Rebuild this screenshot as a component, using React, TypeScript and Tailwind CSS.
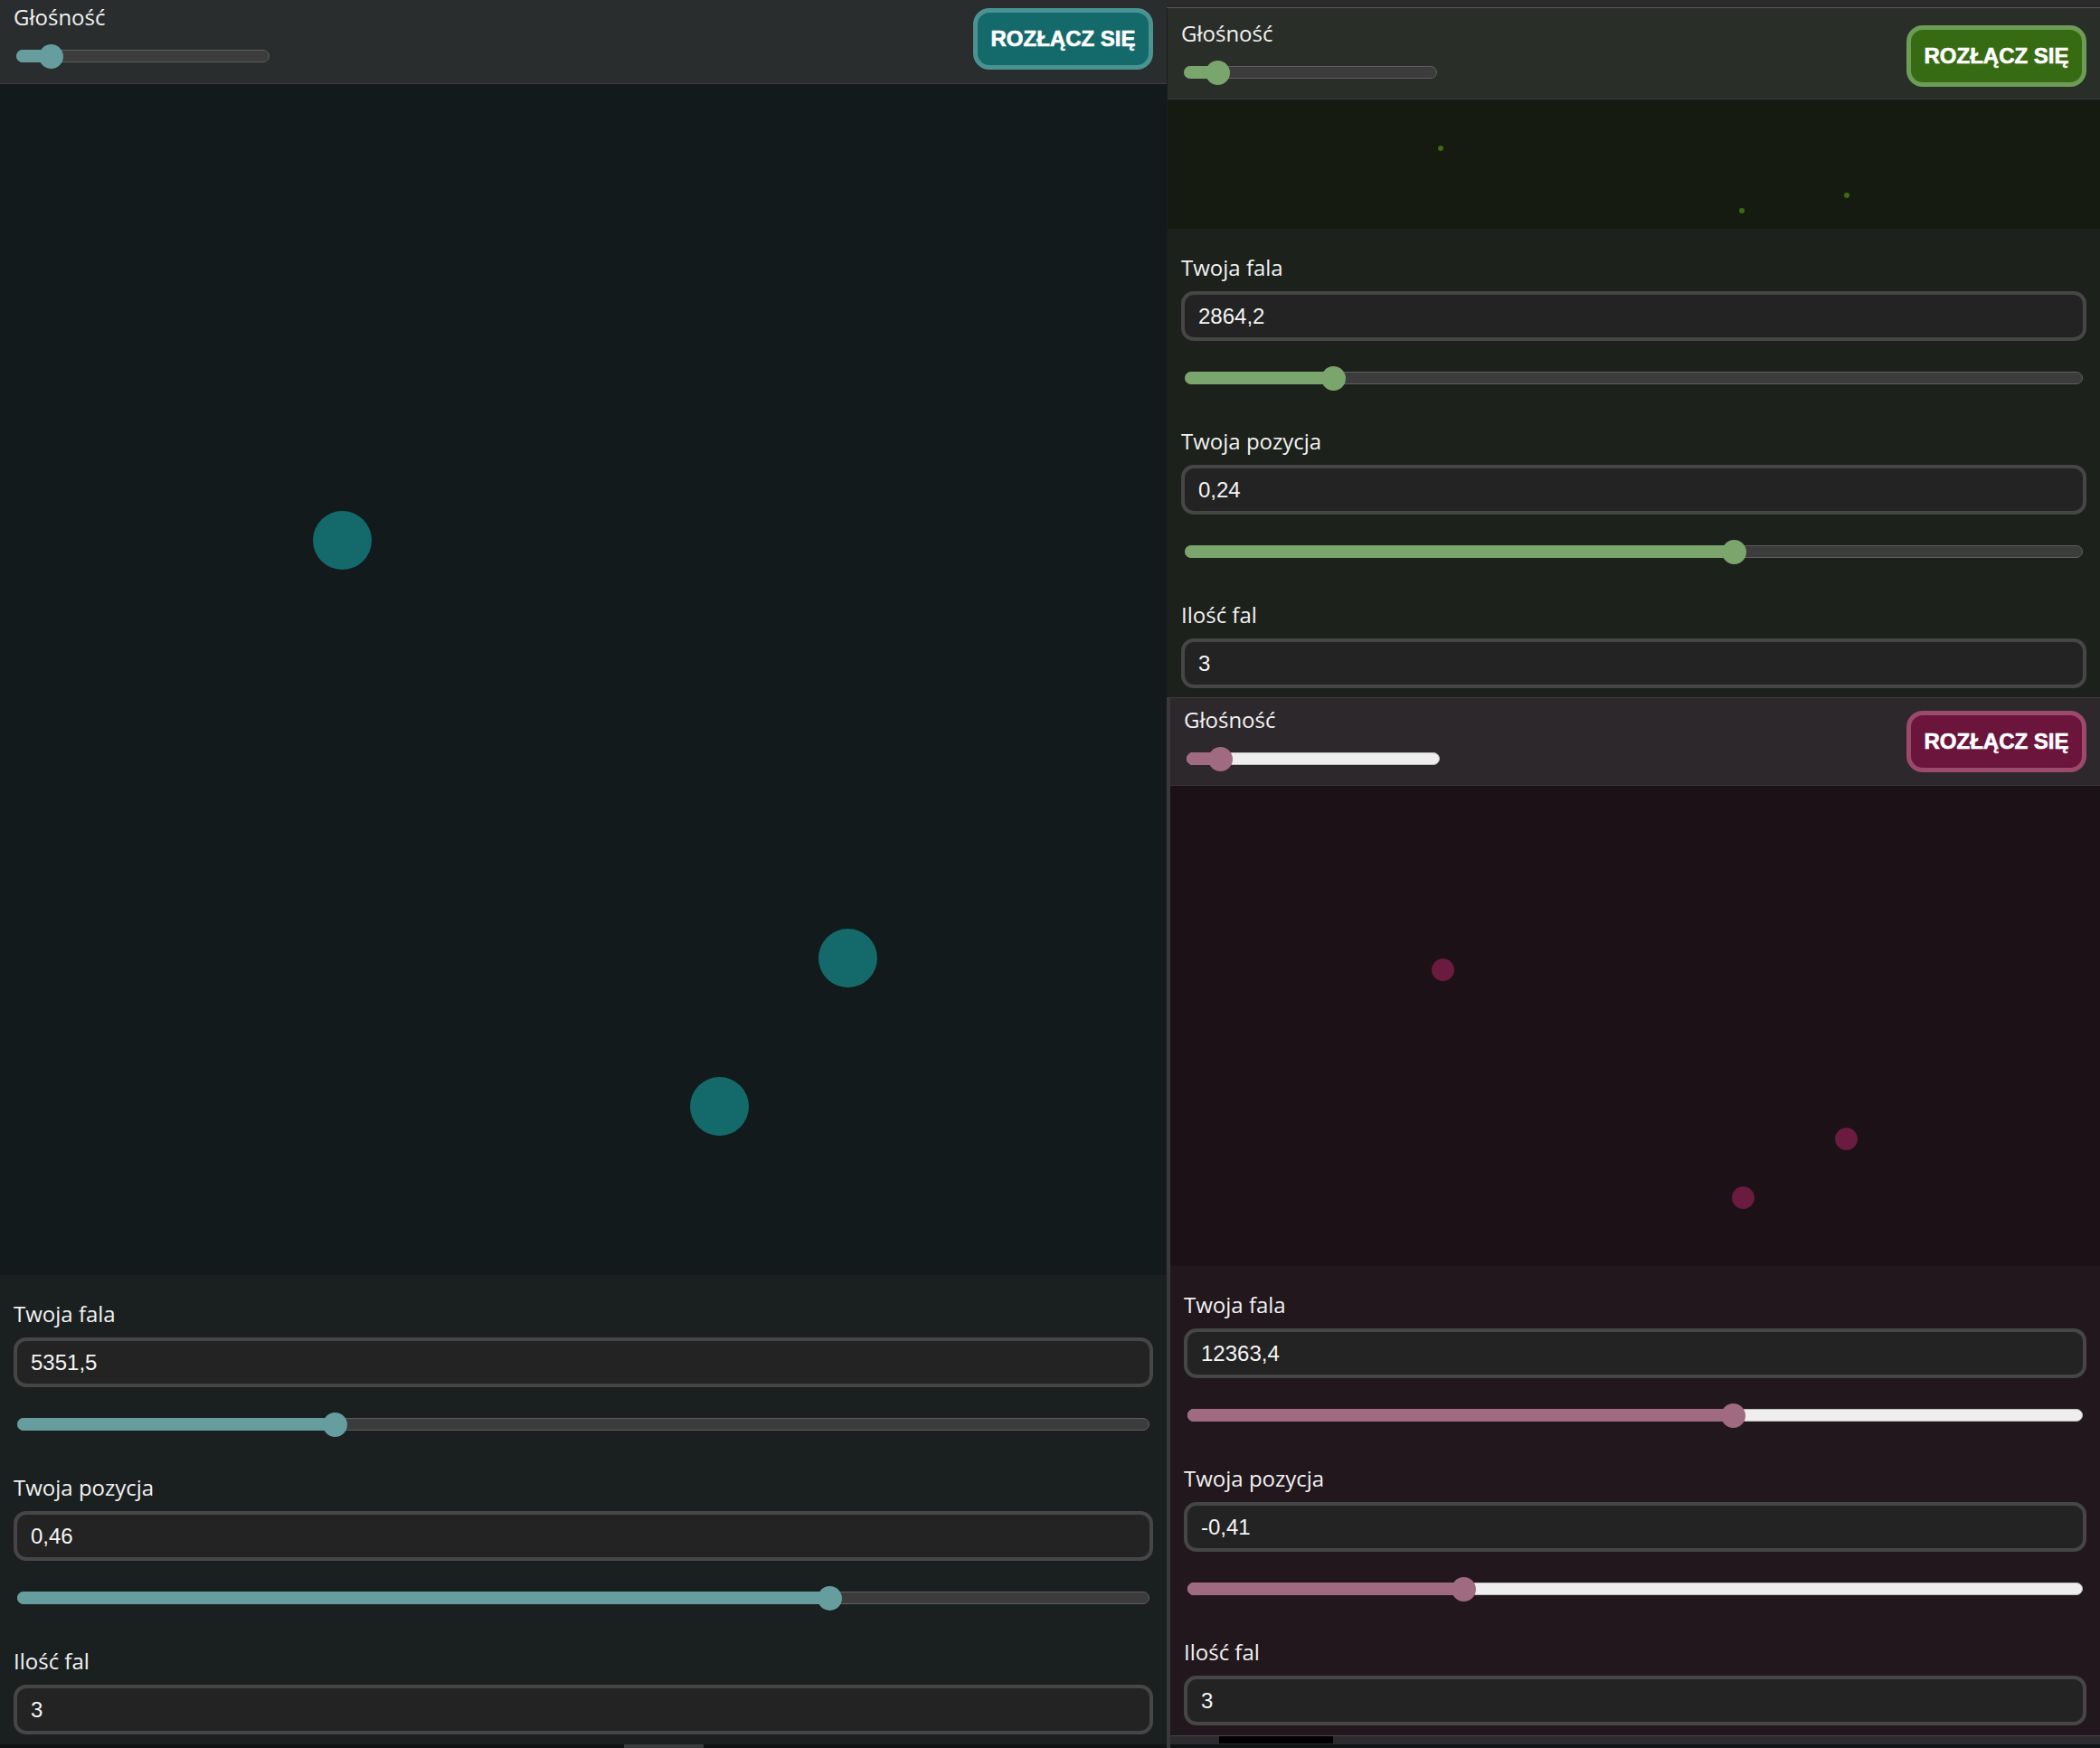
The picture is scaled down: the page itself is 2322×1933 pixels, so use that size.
import React from "react";

type Theme = {
  header: string;
  canvas: string;
  controls: string;
  fill: string;
  rest: string;
  btn: string;
  dot: string;
};

const teal: Theme = {
  header: "bg-[#292d2d] border-b border-[#373c3c]",
  canvas: "bg-[#121a1b]",
  controls: "bg-[#1a2020]",
  fill: "bg-[#669e9f]",
  rest: "bg-[#3c3c3c] border border-[#5e5e5e]",
  btn: "bg-[#146a6a] border-[#4b9393]",
  dot: "bg-[#146a6a]",
};

const green: Theme = {
  header: "bg-[#2a2e29] border-b border-[#383c37]",
  canvas: "bg-[#161b12]",
  controls: "bg-[#1c211b]",
  fill: "bg-[#7aa56c]",
  rest: "bg-[#3c3c3c] border border-[#5e5e5e]",
  btn: "bg-[#376b13] border-[#6d9d55]",
  dot: "bg-[#3a6b14]",
};

const pink: Theme = {
  header: "bg-[#2d282b] border-b border-[#3b3639]",
  canvas: "bg-[#1c1116]",
  controls: "bg-[#21171d]",
  fill: "bg-[#a06a80]",
  rest: "bg-[#eeeeee] border border-[#bdbdbd]",
  btn: "bg-[#6b143c] border-[#9b4a6c]",
  dot: "bg-[#6b1a40]",
};

const labelFont = { fontFamily: '"Open Sans", "Noto Sans", sans-serif' };
const valueFont = { fontFamily: '"Liberation Sans", Arial, sans-serif' };

function Slider({ pct, theme, className }: { pct: number; theme: Theme; className: string }) {
  return (
    <div className={`relative flex h-[28px] items-center ${className}`}>
      <div className={`h-[14px] w-full rounded-full ${theme.rest}`} />
      <div
        className={`absolute left-0 top-[7px] h-[14px] rounded-l-full ${theme.fill}`}
        style={{ width: `${pct}%` }}
      />
      <div
        className={`absolute top-[0.5px] h-[27px] w-[27px] rounded-full ${theme.fill}`}
        style={{ left: `calc(${pct}% - 13.5px)` }}
      />
    </div>
  );
}

function Label({ children, className = "" }: { children: React.ReactNode; className?: string }) {
  return (
    <div className={`h-[30px] text-[24px] leading-[30px] text-[#f2f2f2] ${className}`} style={labelFont}>
      {children}
    </div>
  );
}

function Input({ value }: { value: string }) {
  return (
    <div
      className="mt-[11px] flex h-[55px] items-center rounded-[14px] border-4 border-[#464646] bg-[#232323] pl-[15px] text-[24px] text-[#f5f5f5]"
      style={valueFont}
    >
      {value}
    </div>
  );
}

function Button({ theme, className }: { theme: Theme; className: string }) {
  return (
    <div
      className={`flex h-[68px] w-[199px] shrink-0 items-center justify-center rounded-[18px] border-[5px] text-[24px] font-bold text-white [-webkit-text-stroke:0.6px_white] ${theme.btn} ${className}`}
      style={valueFont}
    >
      ROZŁĄCZ SIĘ
    </div>
  );
}

function Header({
  theme,
  pct,
  headerCls,
  btnCls,
  pt,
}: {
  theme: Theme;
  pct: number;
  headerCls: string;
  btnCls: string;
  pt: string;
}) {
  return (
    <div className={`flex shrink-0 justify-between pl-[15px] pr-[15px] ${theme.header} ${headerCls}`}>
      <div className={`flex flex-col ${pt}`}>
        <Label>Głośność</Label>
        <Slider pct={pct} theme={theme} className="ml-[3px] mt-[14px] w-[280px]" />
      </div>
      <Button theme={theme} className={btnCls} />
    </div>
  );
}

function Controls({
  theme,
  fala,
  falaPct,
  poz,
  pozPct,
  className,
}: {
  theme: Theme;
  fala: string;
  falaPct: number;
  poz: string;
  pozPct: number;
  className: string;
}) {
  return (
    <div className={`flex flex-col px-[15px] pt-[28px] ${theme.controls} ${className}`}>
      <Label>Twoja fala</Label>
      <Input value={fala} />
      <Slider pct={falaPct} theme={theme} className="mx-[4px] mt-[27px]" />
      <Label className="mt-[41px]">Twoja pozycja</Label>
      <Input value={poz} />
      <Slider pct={pozPct} theme={theme} className="mx-[4px] mt-[27px]" />
      <Label className="mt-[41px]">Ilość fal</Label>
      <Input value="3" />
    </div>
  );
}

function Dot({ x, y, d, cls }: { x: number; y: number; d: number; cls: string }) {
  return (
    <div
      className={`absolute rounded-full ${cls}`}
      style={{ left: x - d / 2, top: y - d / 2, width: d, height: d }}
    />
  );
}

export default function App() {
  return (
    <div className="flex h-[1933px] w-[2322px] overflow-hidden bg-[#101414]">
      {/* Left window */}
      <div className="flex w-[1290px] shrink-0 flex-col">
        <Header theme={teal} pct={13.6} headerCls="h-[93px]" btnCls="mt-[9px]" pt="pt-[4px]" />
        <div className={`relative h-[1317px] shrink-0 ${teal.canvas}`}>
          <Dot x={378} y={504} d={65} cls={teal.dot} />
          <Dot x={937} y={966} d={65} cls={teal.dot} />
          <Dot x={795} y={1130} d={65} cls={teal.dot} />
        </div>
        <Controls
          theme={teal}
          fala="5351,5"
          falaPct={28.1}
          poz="0,46"
          pozPct={71.8}
          className="h-[519px] shrink-0"
        />
        <div className="flex h-[4px] shrink-0 bg-[#101414] pl-[690px]">
          <div className="h-full w-[88px] bg-[#3a3d3d]" />
        </div>
      </div>

      {/* Right column */}
      <div className="flex flex-1 flex-col bg-[#2a2a2a]">
        <div className="h-[9px] shrink-0 border-b border-[#555555] bg-[#2a2a2a]" />
        <div className="flex shrink-0 flex-col border-l border-[#1c1c1c]">
          <Header theme={green} pct={13.3} headerCls="h-[101px]" btnCls="mt-[19px]" pt="pt-[13px]" />
          <div className={`relative h-[143px] shrink-0 ${green.canvas}`}>
            <Dot x={302} y={54} d={6} cls={green.dot} />
            <Dot x={635} y={123} d={6} cls={green.dot} />
            <Dot x={751} y={106} d={6} cls={green.dot} />
          </div>
          <Controls
            theme={green}
            fala="2864,2"
            falaPct={16.6}
            poz="0,24"
            pozPct={61.2}
            className="h-[518px] shrink-0"
          />
        </div>
        <div className="flex flex-1 flex-col border-l-4 border-[#3a3a3a]">
          <div className="flex flex-col border-t border-[#3c3c3c]">
            <Header theme={pink} pct={13.4} headerCls="h-[97px]" btnCls="mt-[14px]" pt="pt-[9px]" />
            <div className={`relative h-[531px] shrink-0 ${pink.canvas}`}>
              <Dot x={301} y={203} d={25} cls={pink.dot} />
              <Dot x={747} y={390} d={25} cls={pink.dot} />
              <Dot x={633} y={455} d={25} cls={pink.dot} />
            </div>
            <Controls
              theme={pink}
              fala="12363,4"
              falaPct={61.0}
              poz="-0,41"
              pozPct={30.9}
              className="h-[519px] shrink-0"
            />
          </div>
          <div className="flex h-[10px] shrink-0 border-t border-[#444444] bg-[#2c2c30] pl-[54px]">
            <div className="h-[8px] w-[126px] bg-black" />
          </div>
          <div className="flex-1 bg-[#101414]" />
        </div>
      </div>
    </div>
  );
}
